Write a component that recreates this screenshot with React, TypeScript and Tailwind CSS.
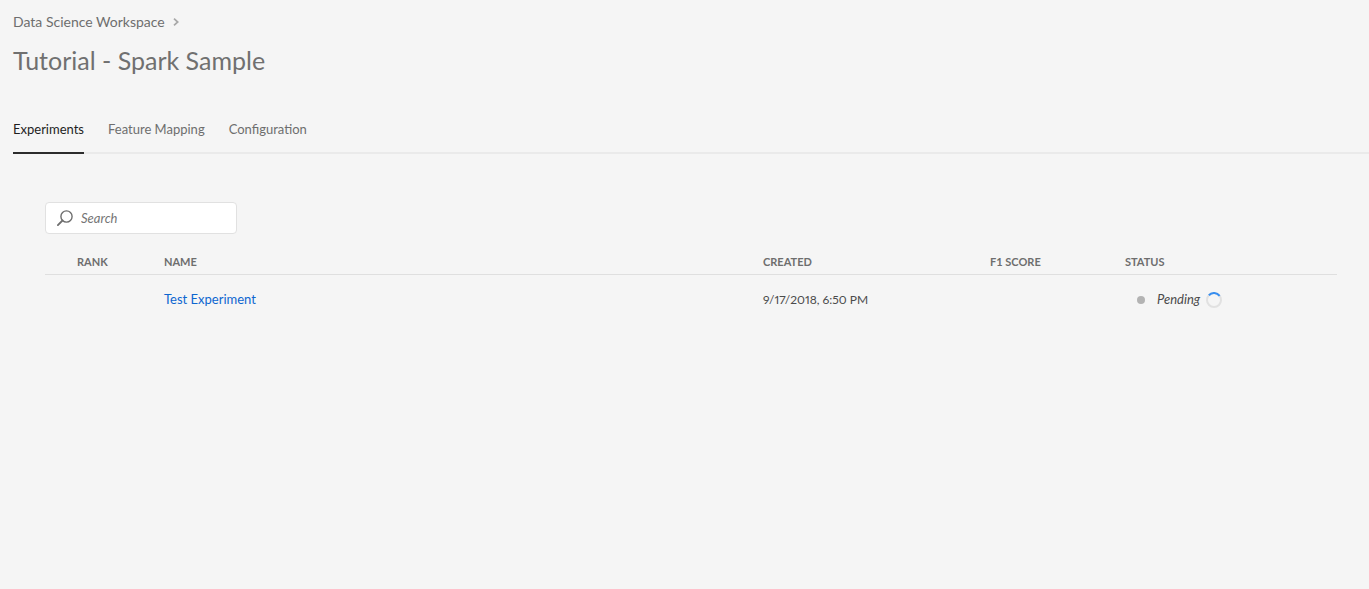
const tabs = ["Experiments", "Feature Mapping", "Configuration"];

const experiments = [
  { name: "Test Experiment", created: "9/17/2018, 6:50 PM", score: "", status: "Pending" },
];

function ChevronIcon() {
  return (
    <svg width="6" height="8" viewBox="0 0 6 8" fill="none" stroke="#a8a8a8" strokeWidth="1.7" aria-hidden="true">
      <path d="M1 0.7 4.7 4 1 7.3" />
    </svg>
  );
}

function SearchIcon() {
  return (
    <svg width="16" height="16" viewBox="0 0 16 16" className="shrink-0" fill="none" stroke="#6e6e6e" aria-hidden="true">
      <circle cx="9.5" cy="6.5" r="5.6" strokeWidth="1.4" />
      <path d="M5.5 10.5 0.9 15.1" strokeWidth="1.8" strokeLinecap="round" />
    </svg>
  );
}

function Spinner() {
  return (
    <svg width="16" height="16" viewBox="0 0 16 16" fill="none" aria-hidden="true">
      <circle cx="8" cy="8" r="7" stroke="#e1e1e1" strokeWidth="2" />
      <path d="M2.9 3.2A7 7 0 0 1 13.6 3.8" stroke="#378ef0" strokeWidth="2" />
    </svg>
  );
}

export default function App() {
  return (
    <div className="min-h-screen bg-[#f5f5f5] pl-[13px] font-['Lato','Open_Sans',sans-serif] text-sm text-[#4b4b4b]">
      <header className="pt-3">
        <nav aria-label="Breadcrumb" className="flex items-center gap-2 text-sm leading-5 text-[#6e6e6e]">
          <a href="#workspace">Data Science Workspace</a>
          <ChevronIcon />
        </nav>
        <h1 className="mt-3 text-[25px] leading-8 text-[#707070]">Tutorial - Spark Sample</h1>
      </header>

      <nav aria-label="Sections" className="mt-7 flex gap-6 border-b-2 border-[#eaeaea] text-[13px]">
        {tabs.map((tab, i) => (
          <a
            key={tab}
            href={"#" + tab}
            aria-current={i === 0 ? "page" : undefined}
            className={
              i === 0
                ? "-mb-0.5 border-b-2 border-[#2c2c2c] pt-[15px] pb-[13px] leading-5 text-[#1e1e1e]"
                : "pt-[15px] pb-[13px] leading-5 text-[#6e6e6e]"
            }
          >
            {tab}
          </a>
        ))}
      </nav>

      <main className="pt-12 pr-8 pl-8">
        <label className="flex h-8 w-48 items-center gap-2 rounded border border-[#e1e1e1] bg-white px-[11px]">
          <SearchIcon />
          <input
            type="text"
            aria-label="Search"
            placeholder="Search"
            className="w-full min-w-0 bg-transparent text-[13px] italic outline-none placeholder:text-[#757575]"
          />
        </label>

        <table className="mt-4 w-full table-fixed text-left text-[13px]">
          <thead className="border-b border-[#dfdfdf] text-[11px] leading-4 text-[#6e6e6e]">
            <tr>
              <th className="w-[119px] pt-1 pb-1 pl-8 font-bold">RANK</th>
              <th className="pt-1 pb-1 font-bold">NAME</th>
              <th className="w-[227px] pt-1 pb-1 font-bold">CREATED</th>
              <th className="w-[135px] pt-1 pb-1 font-bold">F1 SCORE</th>
              <th className="w-[212px] pt-1 pb-1 font-bold">STATUS</th>
            </tr>
          </thead>
          <tbody>
            {experiments.map((row) => (
              <tr key={row.name} className="h-[50px]">
                <td />
                <td>
                  <a href="#experiment" className="text-[#0d66d0]">{row.name}</a>
                </td>
                <td className="text-xs proportional-nums">{row.created}</td>
                <td>{row.score}</td>
                <td>
                  <div className="flex items-center pl-3">
                    <span className="mr-3 h-2 w-2 rounded-full bg-[#b3b3b3]" />
                    <span className="mr-1.5 italic">{row.status}</span>
                    <Spinner />
                  </div>
                </td>
              </tr>
            ))}
          </tbody>
        </table>
      </main>
    </div>
  );
}
